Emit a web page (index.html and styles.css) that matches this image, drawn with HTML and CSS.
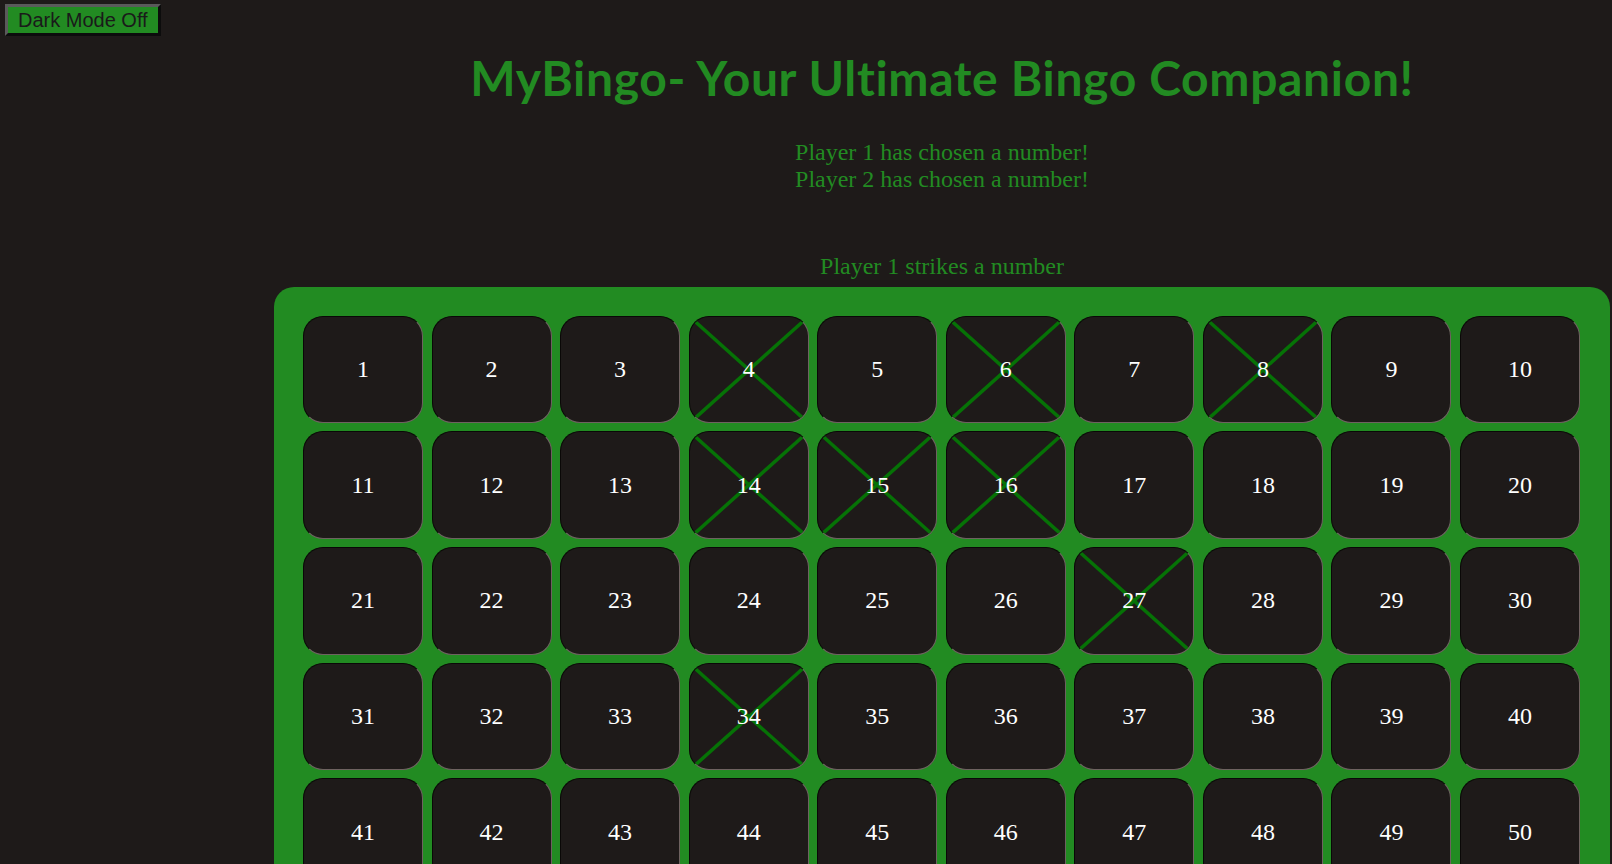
FILE: index.html
```html
<!DOCTYPE html>
<html lang="en">
<head>
<meta charset="utf-8">
<title>MyBingo</title>
<link rel="stylesheet" href="styles.css">
</head>
<body>
<div class="page">
  <aside class="side">
    <button class="mode-btn" type="button">Dark Mode Off</button>
  </aside>
  <main class="main">
    <h1 class="title">MyBingo- Your Ultimate Bingo Companion!</h1>
    <div class="messages">
      <p class="msg">Player 1 has chosen a number!</p>
      <p class="msg">Player 2 has chosen a number!</p>
    </div>
    <p class="status">Player 1 strikes a number</p>
    <div class="board" id="board"></div>
  </main>
</div>
<script src="script.js"></script>
</body>
</html>
```

FILE: script.js
```js
(function () {
  var board = document.getElementById('board');
  var struck = [4, 6, 8, 14, 15, 16, 27, 34];
  var ns = 'http://www.w3.org/2000/svg';
  for (var i = 1; i <= 100; i++) {
    var cell = document.createElement('div');
    cell.className = 'cell';
    if (struck.indexOf(i) !== -1) {
      cell.classList.add('struck');
      var svg = document.createElementNS(ns, 'svg');
      svg.setAttribute('class', 'strike');
      svg.setAttribute('viewBox', '0 0 100 100');
      svg.setAttribute('preserveAspectRatio', 'none');
      var l1 = document.createElementNS(ns, 'line');
      l1.setAttribute('x1', '0'); l1.setAttribute('y1', '0');
      l1.setAttribute('x2', '100'); l1.setAttribute('y2', '100');
      var l2 = document.createElementNS(ns, 'line');
      l2.setAttribute('x1', '100'); l2.setAttribute('y1', '0');
      l2.setAttribute('x2', '0'); l2.setAttribute('y2', '100');
      svg.appendChild(l1); svg.appendChild(l2);
      cell.appendChild(svg);
    }
    var num = document.createElement('span');
    num.className = 'num';
    num.textContent = i;
    cell.appendChild(num);
    board.appendChild(cell);
  }
})();
```

FILE: styles.css
```css
html, body {
  margin: 0;
  padding: 0;
  background: #1e1a19;
}

.page {
  display: grid;
  grid-template-columns: 274px 1336px;
  align-items: start;
}

.side {
  padding: 4px 0 0 5px;
}

.mode-btn {
  display: block;
  height: 32px;
  padding: 0 10px;
  background: #228b22;
  color: #1a1a1a;
  font-family: "Liberation Sans", Arial, sans-serif;
  font-size: 20px;
  line-height: 24px;
  border-width: 3px;
  border-style: solid;
  border-color: #5a5a5a #0c0c0c #0c0c0c #5a5a5a;
  cursor: pointer;
}

.main {
  display: flex;
  flex-direction: column;
  align-items: center;
}

.title {
  margin: 49px 0 0;
  font-family: Lato, "Open Sans", sans-serif;
  font-weight: 700;
  font-size: 48px;
  letter-spacing: 0.65px;
  line-height: 57.6px;
  color: #228b22;
  text-align: center;
}

.messages {
  margin-top: 32px;
  text-align: center;
}

.msg, .status {
  margin: 0;
  font-family: "Liberation Serif", "Times New Roman", serif;
  font-size: 24px;
  line-height: 27px;
  color: #228b22;
  text-align: center;
}

.status {
  margin-top: 60px;
}

.board {
  align-self: stretch;
  margin-top: 7px;
  padding: 29px 30px 30px 29px;
  background: #228b22;
  border-radius: 20px;
  display: grid;
  grid-template-columns: repeat(10, 1fr);
  grid-auto-rows: 107.7px;
  column-gap: 8.6px;
  row-gap: 8px;
}

.cell {
  position: relative;
  overflow: hidden;
  display: flex;
  align-items: center;
  justify-content: center;
  background: #1e1a19;
  border: 1px solid;
  border-color: #0a0807 #6e6260 #6e6260 #0a0807;
  border-radius: 20px;
}

.strike {
  position: absolute;
  inset: 0;
  width: 100%;
  height: 100%;
}

.strike line {
  stroke: #067206;
  stroke-width: 3.5px;
  vector-effect: non-scaling-stroke;
}

.num {
  position: relative;
  font-family: "Liberation Serif", "Times New Roman", serif;
  font-size: 24px;
  color: #ffffff;
}
```
